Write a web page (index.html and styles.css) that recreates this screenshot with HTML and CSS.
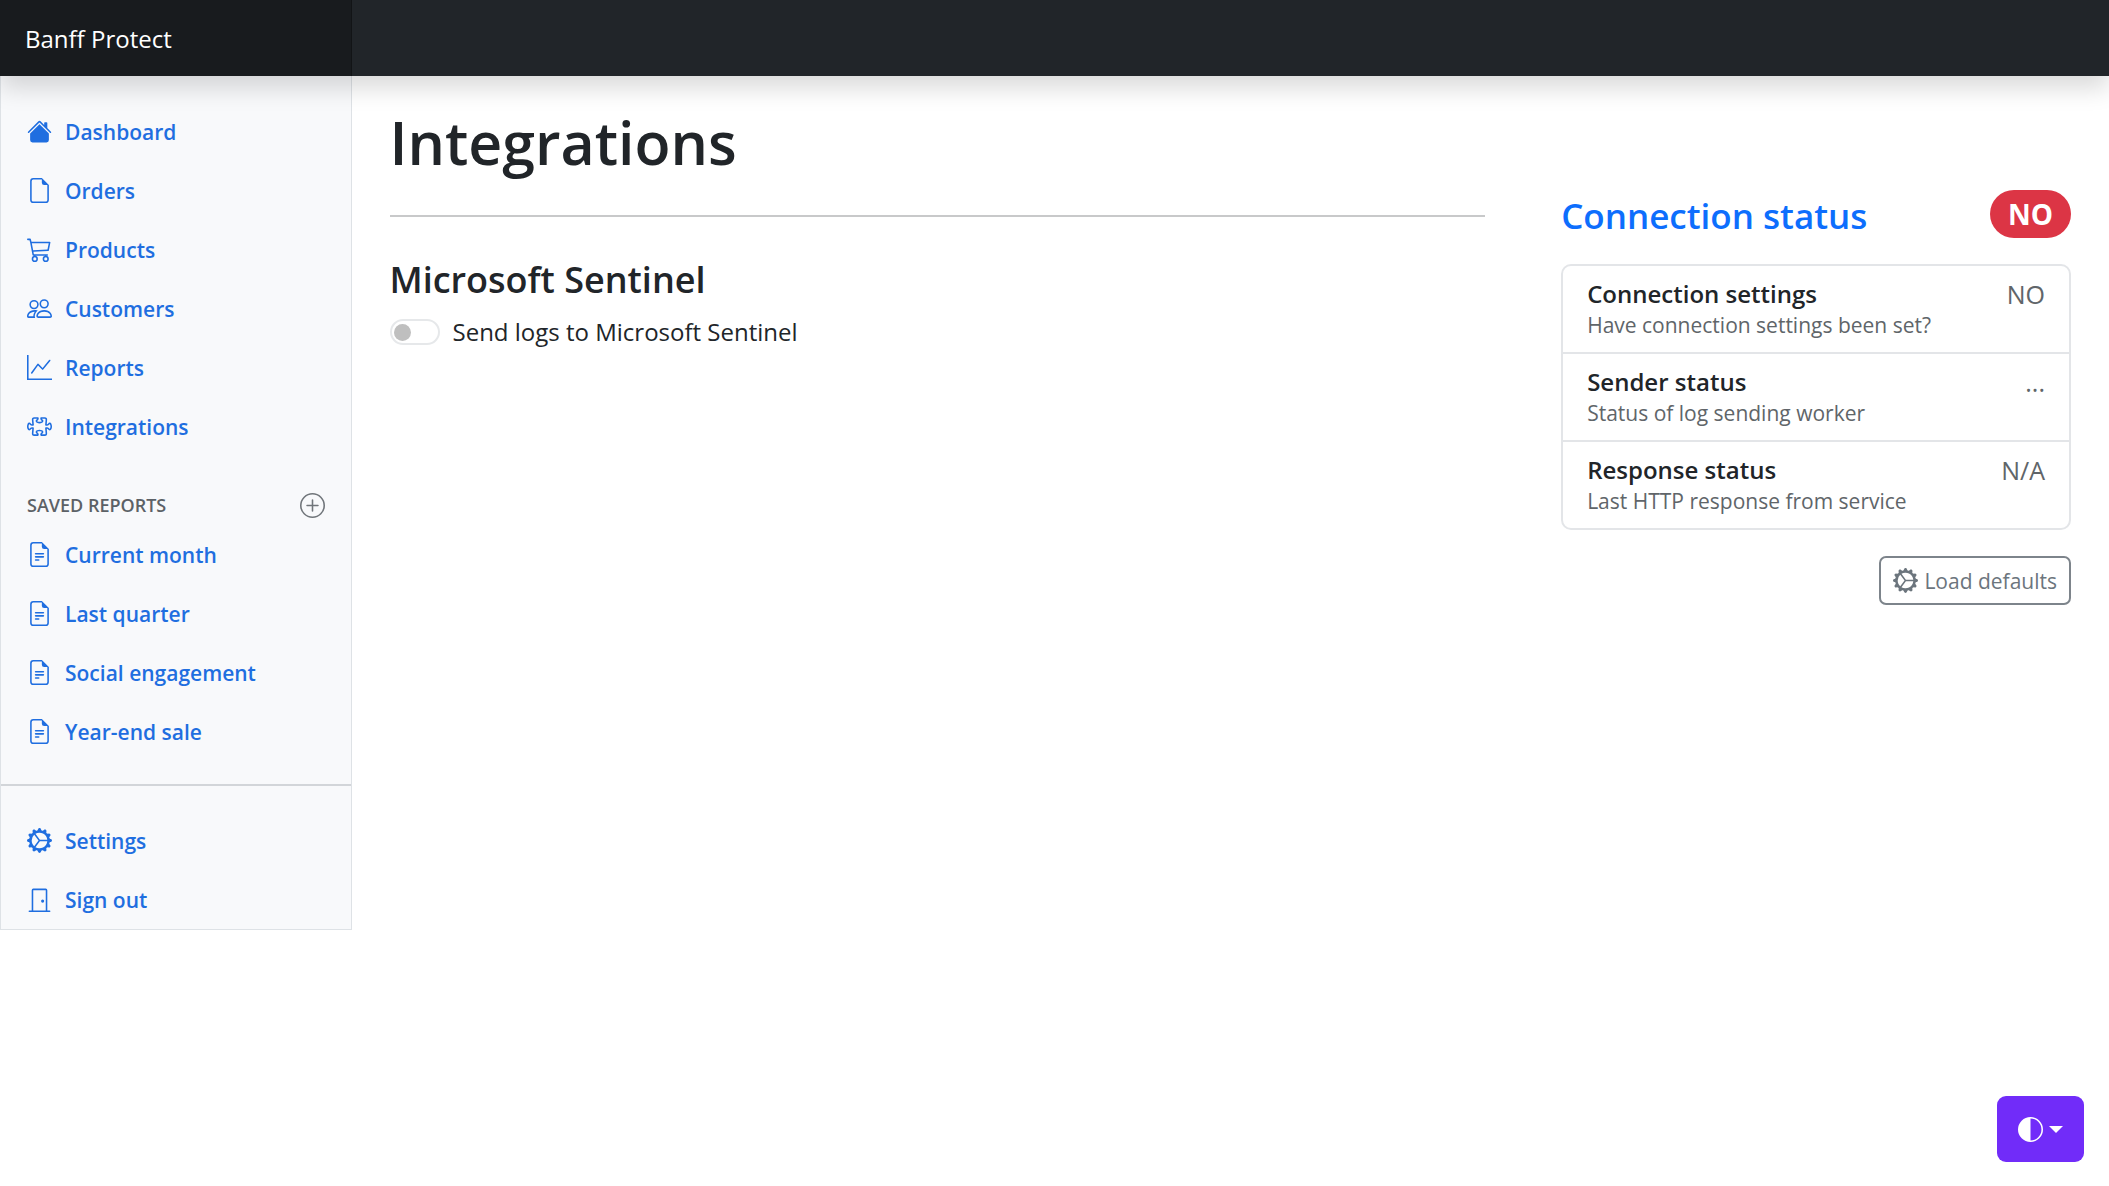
FILE: index.html
```html
<!DOCTYPE html>
<html lang="en">
<head>
<meta charset="utf-8">
<meta name="viewport" content="width=device-width, initial-scale=1">
<title>Integrations - Banff Protect</title>
<link rel="stylesheet" href="styles.css">
</head>
<body>
<svg class="symbols" aria-hidden="true">
  <symbol id="house" viewBox="0 0 16 16"><path d="M8.707 1.5a1 1 0 0 0-1.414 0L.646 8.146a.5.5 0 0 0 .708.708L8 2.207l6.646 6.647a.5.5 0 0 0 .708-.708L13 5.793V2.5a.5.5 0 0 0-.5-.5h-1a.5.5 0 0 0-.5.5v1.293L8.707 1.5Z"/><path d="m8 3.293 6 6V13.5a1.5 1.5 0 0 1-1.5 1.5h-9A1.5 1.5 0 0 1 2 13.5V9.293l6-6Z"/></symbol>
  <symbol id="file" viewBox="0 0 16 16"><path d="M14 4.5V14a2 2 0 0 1-2 2H4a2 2 0 0 1-2-2V2a2 2 0 0 1 2-2h5.500L14 4.5zm-3 0A1.5 1.5 0 0 1 9.500 3V1H4a1 1 0 0 0-1 1v12a1 1 0 0 0 1 1h8a1 1 0 0 0 1-1V4.500h-2z"/></symbol>
  <symbol id="cart" viewBox="0 0 16 16"><path d="M0 1.500A.5.5 0 0 1 .5 1H2a.5.5 0 0 1 .485.379L2.890 3H14.500a.5.5 0 0 1 .49.598l-1 5a.5.5 0 0 1-.465.401l-9.397.472L4.415 11H13a.5.5 0 0 1 0 1H4a.5.5 0 0 1-.491-.408L2.010 3.607 1.610 2H.5a.5.5 0 0 1-.5-.5zM3.102 4l.84 4.479 9.144-.459L13.890 4H3.102zM5 12a2 2 0 1 0 0 4 2 2 0 0 0 0-4zm7 0a2 2 0 1 0 0 4 2 2 0 0 0 0-4zm-7 1a1 1 0 1 1 0 2 1 1 0 0 1 0-2zm7 0a1 1 0 1 1 0 2 1 1 0 0 1 0-2z"/></symbol>
  <symbol id="people" viewBox="0 0 16 16"><path d="M15 14s1 0 1-1-1-4-5-4-5 3-5 4 1 1 1 1h8zm-7.978-1A.261.261 0 0 1 7 12.996c.001-.264.167-1.030.76-1.720C8.312 10.629 9.282 10 11 10c1.717 0 2.687.63 3.240 1.276.593.69.758 1.457.76 1.720l-.008.002a.274.274 0 0 1-.014.002H7.022zM11 7a2 2 0 1 0 0-4 2 2 0 0 0 0 4zm3-2a3 3 0 1 1-6 0 3 3 0 0 1 6 0zM6.936 9.280a5.880 5.880 0 0 0-1.230-.247A7.350 7.350 0 0 0 5 9c-4 0-5 3-5 4 0 .667.333 1 1 1h4.216A2.238 2.238 0 0 1 5 13c0-1.010.377-2.042 1.090-2.904.243-.294.526-.569.846-.816zM4.920 10A5.493 5.493 0 0 0 4 13H1c0-.26.164-1.030.76-1.724.545-.636 1.492-1.256 3.160-1.275ZM1.500 5.500a3 3 0 1 1 6 0 3 3 0 0 1-6 0zm3-2a2 2 0 1 0 0 4 2 2 0 0 0 0-4z"/></symbol>
  <symbol id="graph" viewBox="0 0 16 16"><path d="M0 0h1v15h15v1H0V0Zm14.817 3.113a.5.5 0 0 1 .07.704l-4.500 5.500a.5.5 0 0 1-.74.037L7.060 6.767l-3.656 5.027a.5.5 0 0 1-.808-.588l4-5.500a.5.5 0 0 1 .758-.06l2.609 2.610 4.150-5.073a.5.5 0 0 1 .704-.07Z"/></symbol>
  <symbol id="puzzle" viewBox="0 0 16 16"><path d="M3.112 3.645A1.5 1.5 0 0 1 4.605 2H7a.5.5 0 0 1 .5.5v.382c0 .696-.497 1.182-.872 1.469a.459.459 0 0 0-.115.118.113.113 0 0 0-.012.025L6.5 4.5v.003l.003.01c.004.01.014.028.036.053a.86.86 0 0 0 .27.194C7.09 4.9 7.51 5 8 5c.492 0 .912-.1 1.19-.24a.86.86 0 0 0 .271-.194.213.213 0 0 0 .039-.063v-.009a.112.112 0 0 0-.012-.025.459.459 0 0 0-.115-.118c-.375-.287-.872-.773-.872-1.469V2.5A.5.5 0 0 1 9 2h2.395a1.5 1.5 0 0 1 1.493 1.645L12.645 6.5h.237c.195 0 .42-.147.675-.48.21-.274.528-.52.943-.52.568 0 .947.447 1.154.862C15.877 6.807 16 7.387 16 8s-.123 1.193-.346 1.638c-.207.415-.586.862-1.154.862-.415 0-.733-.246-.943-.52-.255-.333-.48-.48-.675-.48h-.237l.243 2.855A1.5 1.5 0 0 1 11.395 14H9a.5.5 0 0 1-.5-.5v-.382c0-.696.497-1.182.872-1.469a.459.459 0 0 0 .115-.118.113.113 0 0 0 .012-.025L9.5 11.5v-.003a.214.214 0 0 0-.039-.064.859.859 0 0 0-.27-.193C8.91 11.1 8.49 11 8 11c-.491 0-.912.1-1.19.24a.859.859 0 0 0-.271.194.214.214 0 0 0-.039.063v.003l.001.006a.113.113 0 0 0 .012.025c.016.027.05.068.115.118.375.287.872.773.872 1.469v.382a.5.5 0 0 1-.5.5H4.605a1.5 1.5 0 0 1-1.493-1.645L3.356 9.5h-.238c-.195 0-.42.147-.675.48-.21.274-.528.52-.943.52-.568 0-.947-.447-1.154-.862C.123 9.193 0 8.613 0 8s.123-1.193.346-1.638C.553 5.947.932 5.5 1.5 5.5c.415 0 .733.246.943.52.255.333.48.48.675.48h.238l-.244-2.855zM4.605 3a.5.5 0 0 0-.498.55l.001.007.29 3.4A.5.5 0 0 1 3.9 7.5h-.782c-.696 0-1.182-.497-1.469-.872a.459.459 0 0 0-.118-.115.112.112 0 0 0-.025-.012L1.5 6.5h-.003a.213.213 0 0 0-.064.039.86.86 0 0 0-.193.27C1.1 7.09 1 7.51 1 8c0 .491.1.912.24 1.19.07.14.14.225.194.271a.213.213 0 0 0 .063.039H1.5l.006-.001a.112.112 0 0 0 .025-.012.459.459 0 0 0 .118-.115c.287-.375.773-.872 1.469-.872H3.9a.5.5 0 0 1 .498.542l-.29 3.408a.5.5 0 0 0 .497.55h1.878c-.048-.166-.195-.352-.463-.557-.274-.21-.52-.528-.52-.943 0-.568.447-.947.862-1.154C6.807 10.123 7.387 10 8 10s1.193.123 1.638.346c.415.207.862.586.862 1.154 0 .415-.246.733-.52.943-.268.205-.415.39-.463.557h1.878a.5.5 0 0 0 .498-.55l-.001-.007-.29-3.4A.5.5 0 0 1 12.1 8.5h.782c.696 0 1.182.497 1.469.872.05.065.091.099.118.115.013.008.021.01.025.012a.02.02 0 0 0 .006.001h.003a.214.214 0 0 0 .064-.039.86.86 0 0 0 .193-.27c.14-.28.24-.7.24-1.191 0-.492-.1-.912-.24-1.19a.86.86 0 0 0-.194-.271.215.215 0 0 0-.063-.039H14.5l-.006.001a.113.113 0 0 0-.025.012.459.459 0 0 0-.118.115c-.287.375-.773.872-1.469.872H12.1a.5.5 0 0 1-.498-.543l.29-3.407a.5.5 0 0 0-.497-.55H9.517c.048.166.195.352.463.557.274.21.52.528.52.943 0 .568-.447.947-.862 1.154C9.193 5.877 8.613 6 8 6s-1.193-.123-1.638-.346C5.947 5.447 5.5 5.068 5.5 4.5c0-.415.246-.733.52-.943.268-.205.415-.39.463-.557H4.605z"/></symbol>
  <symbol id="plus" viewBox="0 0 16 16"><path d="M8 15A7 7 0 1 1 8 1a7 7 0 0 1 0 14zm0 1A8 8 0 1 0 8 0a8 8 0 0 0 0 16z"/><path d="M8 4a.5.5 0 0 1 .5.5v3h3a.5.5 0 0 1 0 1h-3v3a.5.5 0 0 1-1 0v-3h-3a.5.5 0 0 1 0-1h3v-3A.5.5 0 0 1 8 4z"/></symbol>
  <symbol id="file-text" viewBox="0 0 16 16"><path d="M5.5 7a.5.5 0 0 0 0 1h5a.5.5 0 0 0 0-1h-5zM5 9.5a.5.5 0 0 1 .5-.5h5a.5.5 0 0 1 0 1h-5a.5.5 0 0 1-.5-.5zm0 2a.5.5 0 0 1 .5-.5h2a.5.5 0 0 1 0 1h-2a.5.5 0 0 1-.5-.5z"/><path d="M9.5 0H4a2 2 0 0 0-2 2v12a2 2 0 0 0 2 2h8a2 2 0 0 0 2-2V4.5L9.5 0zm0 1v2A1.5 1.5 0 0 0 11 4.5h2V14a1 1 0 0 1-1 1H4a1 1 0 0 1-1-1V2a1 1 0 0 1 1-1h5.5z"/></symbol>
  <symbol id="gear" viewBox="0 0 16 16"><path d="M7.068.727c.243-.97 1.62-.97 1.864 0l.071.286a.96.96 0 0 0 1.622.434l.205-.211c.695-.719 1.888-.03 1.613.931l-.08.284a.96.96 0 0 0 1.187 1.187l.283-.081c.96-.275 1.65.918.931 1.613l-.211.205a.96.96 0 0 0 .434 1.622l.286.071c.97.243.97 1.62 0 1.864l-.286.071a.96.96 0 0 0-.434 1.622l.211.205c.719.695.03 1.888-.931 1.613l-.284-.08a.96.96 0 0 0-1.187 1.187l.081.283c.275.96-.918 1.65-1.613.931l-.205-.211a.96.96 0 0 0-1.622.434l-.071.286c-.243.97-1.62.97-1.864 0l-.071-.286a.96.96 0 0 0-1.622-.434l-.205.211c-.695.719-1.888.03-1.613-.931l.08-.284a.96.96 0 0 0-1.186-1.187l-.284.081c-.96.275-1.65-.918-.931-1.613l.211-.205a.96.96 0 0 0-.434-1.622l-.286-.071c-.97-.243-.97-1.62 0-1.864l.286-.071a.96.96 0 0 0 .434-1.622l-.211-.205c-.719-.695-.03-1.888.931-1.613l.284.08a.96.96 0 0 0 1.187-1.186l-.081-.284c-.275-.96.918-1.65 1.613-.931l.205.211a.96.96 0 0 0 1.622-.434l.071-.286zM12.973 8.5H8.25l-2.834 3.779A4.998 4.998 0 0 0 12.973 8.5zm0-1a4.998 4.998 0 0 0-7.557-3.779l2.834 3.78h4.723zM5.048 3.967c-.03.021-.058.043-.087.065l.087-.065zm-.431.355A4.984 4.984 0 0 0 3.002 8c0 1.455.622 2.765 1.615 3.678L7.375 8 4.617 4.322zm.344 7.646.087.065-.087-.065z"/></symbol>
  <symbol id="door" viewBox="0 0 16 16"><path d="M3 2a1 1 0 0 1 1-1h8a1 1 0 0 1 1 1v13h1.5a.5.5 0 0 1 0 1h-13a.5.5 0 0 1 0-1H3V2zm1 13h8V2H4v13z"/><path d="M9 9a1 1 0 1 0 2 0 1 1 0 0 0-2 0z"/></symbol>
  <symbol id="half" viewBox="0 0 16 16"><path d="M8 15A7 7 0 1 0 8 1v14zm0 1A8 8 0 1 1 8 0a8 8 0 0 1 0 16z"/></symbol>
</svg>

<header class="topbar">
  <a class="brand" href="#">Banff Protect</a>
</header>

<div class="layout">
  <nav class="sidebar" aria-label="Main">
    <ul class="nav">
      <li><a class="nav-link" href="#"><svg class="icon"><use href="#house"/></svg>Dashboard</a></li>
      <li><a class="nav-link" href="#"><svg class="icon"><use href="#file"/></svg>Orders</a></li>
      <li><a class="nav-link" href="#"><svg class="icon"><use href="#cart"/></svg>Products</a></li>
      <li><a class="nav-link" href="#"><svg class="icon"><use href="#people"/></svg>Customers</a></li>
      <li><a class="nav-link" href="#"><svg class="icon"><use href="#graph"/></svg>Reports</a></li>
      <li><a class="nav-link" href="#"><svg class="icon"><use href="#puzzle"/></svg>Integrations</a></li>
    </ul>
    <h6 class="nav-heading">
      <span>Saved reports</span>
      <a class="nav-add" href="#" aria-label="Add a new report"><svg class="icon"><use href="#plus"/></svg></a>
    </h6>
    <ul class="nav">
      <li><a class="nav-link" href="#"><svg class="icon"><use href="#file-text"/></svg>Current month</a></li>
      <li><a class="nav-link" href="#"><svg class="icon"><use href="#file-text"/></svg>Last quarter</a></li>
      <li><a class="nav-link" href="#"><svg class="icon"><use href="#file-text"/></svg>Social engagement</a></li>
      <li><a class="nav-link" href="#"><svg class="icon"><use href="#file-text"/></svg>Year-end sale</a></li>
    </ul>
    <hr class="nav-rule">
    <ul class="nav">
      <li><a class="nav-link" href="#"><svg class="icon"><use href="#gear"/></svg>Settings</a></li>
      <li><a class="nav-link" href="#"><svg class="icon"><use href="#door"/></svg>Sign out</a></li>
    </ul>
  </nav>

  <main class="content">
    <section class="primary">
      <h1 class="title">Integrations</h1>
      <hr class="rule">
      <h3 class="subtitle">Microsoft Sentinel</h3>
      <div class="switch">
        <input class="switch-input" type="checkbox" role="switch" id="send-logs">
        <label for="send-logs">Send logs to Microsoft Sentinel</label>
      </div>
    </section>

    <aside class="status">
      <h4 class="status-head">
        <span class="status-title">Connection status</span>
        <span class="badge">NO</span>
      </h4>
      <ul class="status-list">
        <li class="status-item">
          <div><h6 class="item-title">Connection settings</h6><small class="item-note">Have connection settings been set?</small></div>
          <span class="item-value">NO</span>
        </li>
        <li class="status-item">
          <div><h6 class="item-title">Sender status</h6><small class="item-note">Status of log sending worker</small></div>
          <span class="item-value">...</span>
        </li>
        <li class="status-item">
          <div><h6 class="item-title">Response status</h6><small class="item-note">Last HTTP response from service</small></div>
          <span class="item-value">N/A</span>
        </li>
      </ul>
      <button class="button" type="button"><svg class="icon"><use href="#gear"/></svg>Load defaults</button>
    </aside>
  </main>
</div>

<button class="theme" type="button" aria-label="Toggle theme"><svg class="icon"><use href="#half"/></svg><span class="caret"></span></button>
</body>
</html>
```
FILE: styles.css
```css
* { box-sizing: border-box; }

body {
  margin: 0;
  background: #fff;
  color: #212529;
  font-family: "Open Sans", "Noto Sans", sans-serif;
  font-size: 24px;
  line-height: 36px;
}

h1, h3, h4, h6, ul, hr { margin: 0; padding: 0; }
ul { list-style: none; }
hr { border: 0; }
a { text-decoration: none; }

.symbols { display: none; }
.icon { width: 25px; height: 25px; flex: none; fill: currentColor; }

.topbar {
  position: sticky;
  top: 0;
  z-index: 2;
  display: grid;
  grid-template-columns: 1fr 5fr;
  background: #212529;
  box-shadow: 0 12px 25px rgba(0, 0, 0, .15);
}
.brand {
  padding: 21px 25px 19px;
  background: rgba(0, 0, 0, .25);
  box-shadow: inset -1px 0 0 rgba(0, 0, 0, .25);
  color: #fff;
}

.layout {
  display: grid;
  grid-template-columns: 1fr 5fr;
  align-items: start;
}

.sidebar {
  padding-top: 26px;
  border: solid #dee2e6;
  border-width: 0 1px 1px;
  background: #f8f9fb;
}
.nav-link {
  display: flex;
  align-items: center;
  gap: 13px;
  height: 59px;
  padding: 0 26px;
  color: #1f6ee0;
  font-size: 21px;
  font-weight: 600;
}
.nav-heading {
  display: flex;
  align-items: center;
  justify-content: space-between;
  margin: 36px 0 7px;
  padding: 0 26px;
  color: #5c6166;
  font-size: 18px;
  font-weight: 600;
  line-height: 26px;
  text-transform: uppercase;
}
.nav-add { display: flex; color: #70757a; }
.nav-rule { height: 2px; margin: 23px 0 25px; background: #d2d5d9; }

.content {
  display: grid;
  grid-template-columns: repeat(3, 1fr);
  column-gap: 76px;
  padding: 28px 38px;
}
.primary { grid-column: span 2; }
.title {
  font-size: 59px;
  font-weight: 600;
  line-height: 76px;
}
.rule { height: 2px; margin: 35px 0 38px; background: #c8c9ca; }
.subtitle {
  font-size: 36px;
  font-weight: 600;
  line-height: 50px;
}
.switch {
  display: flex;
  align-items: center;
  gap: 13px;
  margin-top: 9px;
}
.switch-input {
  display: flex;
  align-items: center;
  appearance: none;
  width: 50px;
  height: 26px;
  margin: 0;
  padding: 0 2px;
  border: 2px solid #e6e8ea;
  border-radius: 13px;
  background: #fff;
}
.switch-input::before {
  content: "";
  width: 17px;
  height: 17px;
  border-radius: 50%;
  background: #bfbfbf;
}
.switch-input:checked { justify-content: flex-end; }

.status {
  display: flex;
  flex-direction: column;
  padding-top: 86px;
}
.status-head {
  display: flex;
  align-items: center;
  justify-content: space-between;
  color: #0d6efd;
  font-size: 35px;
  font-weight: 600;
  line-height: 48px;
}
.status-title {
  height: 48px;
  line-height: 52px;
}
.badge {
  padding: 0 18px;
  border-radius: 24px;
  background: #dc3545;
  color: #fff;
  font-size: 28px;
  font-weight: 700;
}
.status-list {
  margin: 26px 0;
  border: 2px solid #e3e5e8;
  border-radius: 10px;
}
.status-item {
  display: flex;
  justify-content: space-between;
  padding: 12px 24px;
}
.status-item + .status-item { border-top: 2px solid #e3e5e8; }
.item-title {
  font-size: 24px;
  font-weight: 600;
  line-height: 32px;
}
.item-note {
  display: block;
  color: #606569;
  font-size: 21px;
  line-height: 30px;
}
.item-value { color: #606569; font-size: 25px; line-height: 32px; }

.button {
  display: flex;
  align-items: center;
  align-self: flex-end;
  gap: 6px;
  height: 49px;
  padding: 0 12px;
  border: 2px solid #7d848b;
  border-radius: 7px;
  background: #fff;
  color: #6c757d;
  font: inherit;
  font-size: 21px;
}

.theme {
  position: fixed;
  right: 25px;
  bottom: 24px;
  display: flex;
  align-items: center;
  justify-content: center;
  gap: 6px;
  width: 87px;
  height: 66px;
  border: 0;
  border-radius: 9px;
  background: #712cf9;
  color: #fff;
}
.caret {
  border: 7px solid transparent;
  border-top-color: currentColor;
  border-bottom: 0;
}
```
